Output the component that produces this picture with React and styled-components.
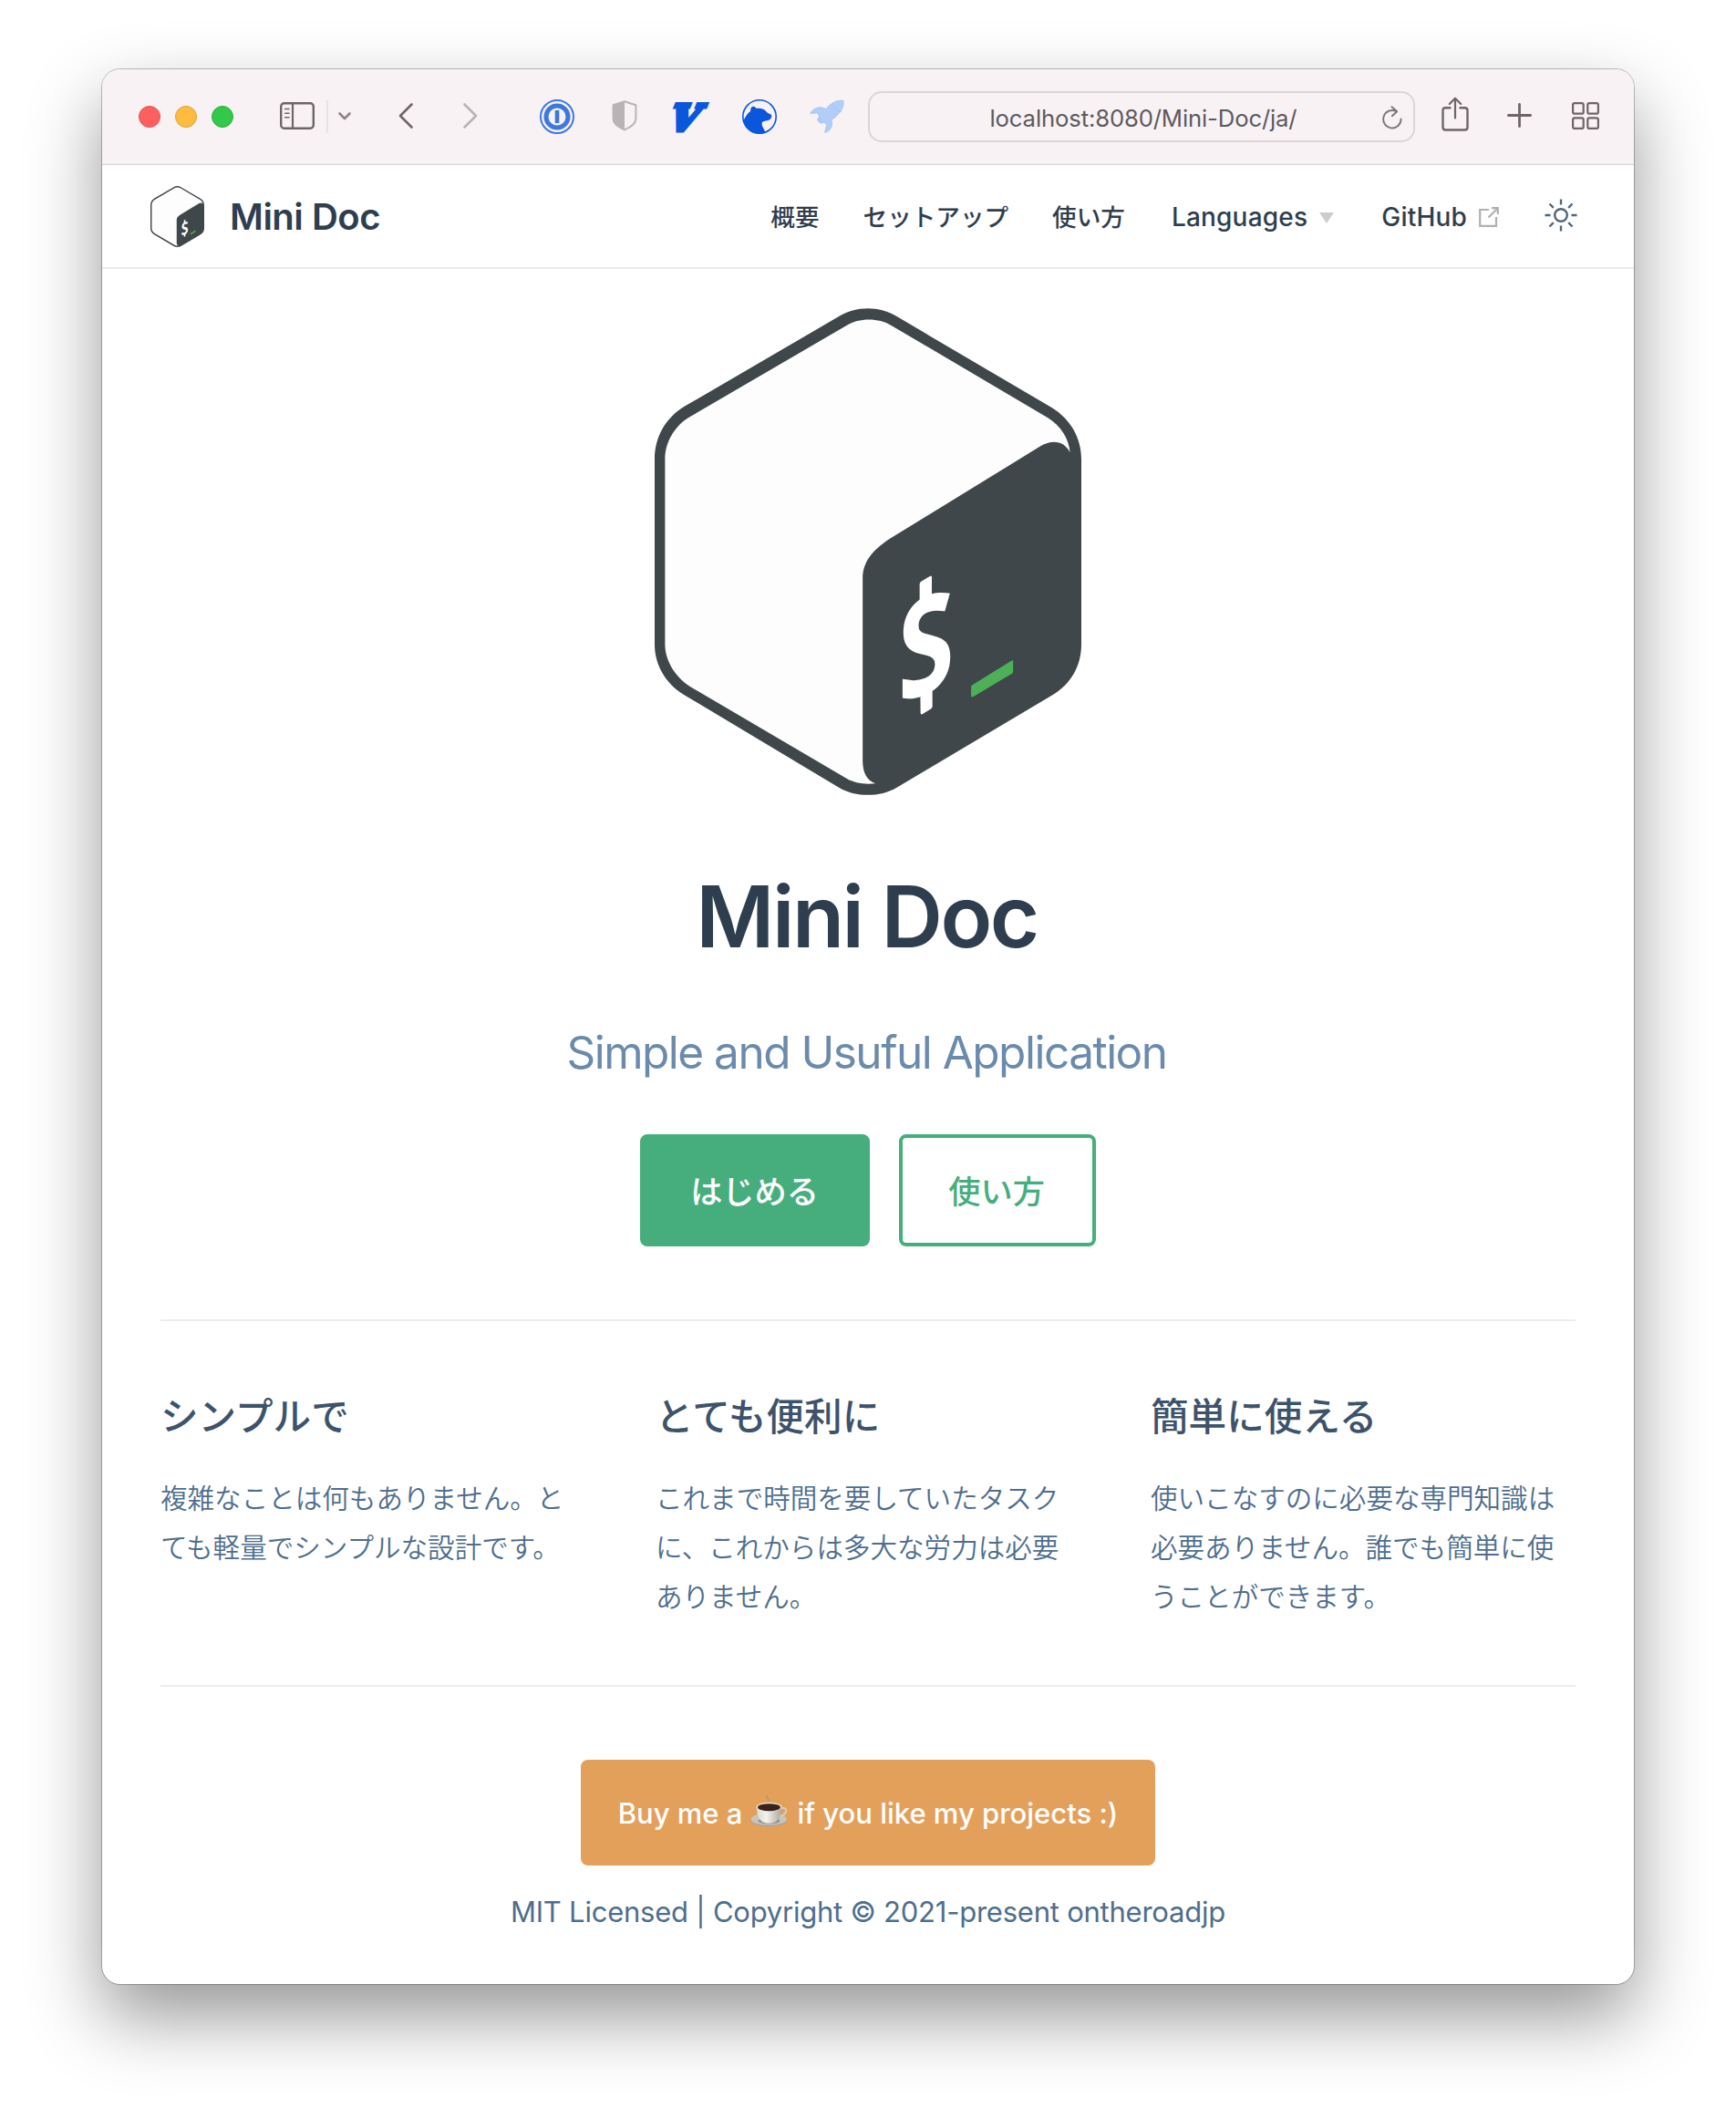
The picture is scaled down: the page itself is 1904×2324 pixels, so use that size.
import React from "react";
import styled, { createGlobalStyle } from "styled-components";

const sans = `Inter, "Noto Sans CJK JP", "Liberation Sans", sans-serif`;

const GlobalStyle = createGlobalStyle`
  * { box-sizing: border-box; }
  html, body { margin: 0; padding: 0; background: #fff; }
  body { font-family: ${sans}; color: #2f3e4e; -webkit-font-smoothing: antialiased; }
  h1, h2, p { margin: 0; }
  svg { display: block; flex: none; overflow: visible; }
  a { text-decoration: none; color: inherit; }
`;

const Desktop = styled.div`
  width: 1904px;
  height: 2324px;
  padding: 76px 112px 0;
  overflow: hidden;
`;

const Window = styled.div`
  height: 2100px;
  border-radius: 20px;
  background: #fff;
  overflow: hidden;
  display: flex;
  flex-direction: column;
  box-shadow: 0 0 0 1px rgba(0, 0, 0, 0.24), 0 36px 80px rgba(0, 0, 0, 0.41);
`;

const Toolbar = styled.div`
  height: 105px;
  flex: none;
  display: flex;
  align-items: center;
  padding: 0 38px 1px 40px;
  background: #f8f2f5;
  border-bottom: 1px solid #d5d2d4;
`;

const Lights = styled.div`
  display: flex;
  gap: 16px;
`;

const Light = styled.span`
  width: 24px;
  height: 24px;
  border-radius: 50%;
  background: ${(p) => p.$fill};
  border: 1px solid ${(p) => p.$edge};
`;

const Tool = styled.span`
  margin-left: ${(p) => p.$gap}px;
  padding-bottom: ${(p) => p.$lift || 0}px;
`;

const Divider = styled.span`
  width: 2px;
  height: 36px;
  margin-left: 13px;
  background: #e8e2e5;
`;

const AddressBar = styled.div`
  width: 600px;
  height: 56px;
  margin-left: 26px;
  padding: 2px 12px 0 0;
  display: flex;
  align-items: center;
  border: 2px solid #dbd5d8;
  border-radius: 15px;
`;

const Address = styled.span`
  flex: 1;
  text-align: center;
  padding: 2px 0 0 38px;
  font-size: 25.7px;
  letter-spacing: -0.15px;
  color: #5d5a5c;
`;

const Navbar = styled.header`
  height: 114px;
  flex: none;
  display: flex;
  align-items: center;
  padding: 0 62px 0 53px;
  border-bottom: 2px solid #eaeaef;
`;

const Brand = styled.a`
  display: flex;
  align-items: center;
  gap: 28px;
  font-size: 40px;
  font-weight: 600;
  letter-spacing: -0.5px;
`;

const Links = styled.nav`
  margin-left: auto;
  display: flex;
  align-items: center;
`;

const NavLink = styled.a`
  display: flex;
  align-items: center;
  gap: 13px;
  margin-left: ${(p) => p.$gap || 0}px;
  padding-top: ${(p) => (p.$latin ? 1 : 2)}px;
  font-size: ${(p) => (p.$latin ? 28 : 26.6)}px;
  font-weight: 500;
  line-height: 40px;
  letter-spacing: ${(p) => (p.$latin ? 0.2 : 0)}px;
`;

const Caret = styled.span`
  border: 8px solid transparent;
  border-top: 12px solid #ccc;
  border-bottom: 0;
  margin-top: 3px;
`;

const Home = styled.main`
  flex: 1;
  padding: 43px 64px 0;
`;

const Hero = styled.section`
  display: flex;
  flex-direction: column;
  align-items: center;
`;

const Title = styled.h1`
  margin-top: 77px;
  padding-right: 3px;
  font-size: 93.4px;
  line-height: 113px;
  font-weight: 600;
  letter-spacing: -2.5px;
`;

const Tagline = styled.p`
  margin-top: 60px;
  padding-right: 3px;
  font-size: 49.5px;
  line-height: 64px;
  letter-spacing: -1.5px;
  color: #6b8bad;
`;

const Actions = styled.div`
  display: flex;
  gap: 32px;
  margin-top: 58px;
`;

const ActionButton = styled.a`
  height: 123px;
  padding: 0 51.7px 2px 50.7px;
  display: flex;
  align-items: center;
  border: 4px solid #46ae7d;
  border-radius: 8px;
  font-size: 35.2px;
  font-weight: 500;
  background: ${(p) => (p.$primary ? "#46ae7d" : "#fff")};
  color: ${(p) => (p.$primary ? "#fff" : "#46ae7d")};
`;

const Features = styled.section`
  display: flex;
  justify-content: space-between;
  height: 403px;
  margin-top: 80px;
  padding-top: 75px;
  border-top: 2px solid #eaecef;
  border-bottom: 2px solid #eaecef;
`;

const Feature = styled.article`
  width: 466px;
`;

const FeatureTitle = styled.h2`
  font-size: 41.6px;
  line-height: 60px;
  font-weight: 500;
  color: #3d536b;
`;

const FeatureText = styled.p`
  margin-top: 32px;
  font-size: 29.56px;
  line-height: 54px;
  font-weight: 350;
  color: #4e6e8e;
`;

const Footer = styled.footer`
  display: flex;
  flex-direction: column;
  align-items: center;
  padding-top: 80px;
  gap: 30px;
  color: #4e6e8e;
  font-size: 31px;
`;

const Coffee = styled.a`
  width: 630px;
  height: 116px;
  display: flex;
  align-items: center;
  justify-content: center;
  gap: 9px;
  border-radius: 8px;
  background: #e3a05b;
  color: #fff;
  font-size: 31px;
  font-weight: 500;
`;

const CoffeeCup = styled.span`
  padding-bottom: 5px;
`;

const License = styled.p`
  line-height: 42px;
  letter-spacing: -0.23px;
`;

function Logo({ width, height }) {
  return (
    <svg width={width} height={height} viewBox="55 50 1401 1468" preserveAspectRatio="none">
      <path
        fill="#3f474a"
        d="M55 505C55 440 90 380 155 345L660 75C715 43 795 43 850 75L1360 350C1420 385 1456 440 1456 505V1063C1456 1130 1420 1185 1360 1217L850 1495C795 1525 715 1525 660 1495L150 1215C90 1180 55 1125 55 1063Z"
      />
      <path
        fill="#fdfdfd"
        d="M89 505C89 455 120 405 170 378L685 102C725 79 790 78 832 102L1345 380C1390 405 1415 445 1419 485C1400 450 1360 445 1322 466L825 746C770 780 738 815 738 865V1415C738 1450 752 1475 780 1483C745 1487 710 1482 685 1468L170 1190C120 1160 89 1110 89 1063Z"
      />
      <text
        transform="matrix(0.83 -0.3 0 1 946 1211)"
        textAnchor="middle"
        fontFamily="Open Sans, sans-serif"
        fontWeight="700"
        fontSize="405"
        fill="#fff"
      >
        S
      </text>
      <path
        fill="#fff"
        d="M925 882Q925 877 930 874L959 858Q965 855 965 862V940H925ZM927 1190H967V1250Q967 1255 962 1258L934 1274Q928 1277 928 1270Z"
      />
      <path
        fill="#4db058"
        d="M1098 1186L1226 1113Q1232 1110 1232 1116V1146Q1232 1150 1228 1152L1100 1222Q1094 1224 1094 1218V1192Q1094 1188 1098 1186Z"
      />
    </svg>
  );
}

const ink = "#6d6569";

function SidebarIcon() {
  return (
    <svg width="38" height="30" viewBox="0 0 38 30" fill="none" stroke={ink} strokeLinecap="round">
      <rect x="1.2" y="1.2" width="35.6" height="27.6" rx="3.5" strokeWidth="2.4" />
      <path d="M14 1.5V28.5" strokeWidth="2.2" />
      <path d="M5.7 7.5H10M5.7 12.2H10M5.7 16.8H10" strokeWidth="1.6" />
    </svg>
  );
}

function Chevron({ width, height, d, color, weight }) {
  return (
    <svg width={width} height={height} viewBox={`0 0 ${width} ${height}`} fill="none">
      <path d={d} stroke={color} strokeWidth={weight} strokeLinecap="round" strokeLinejoin="round" />
    </svg>
  );
}

function PasswordIcon() {
  return (
    <svg width="38" height="38" viewBox="0 0 38 38" fill="none" stroke="#3d78de">
      <circle cx="19" cy="19" r="18" strokeWidth="2" />
      <circle cx="19" cy="19" r="12" strokeWidth="5" />
      <path d="M19 12V26" strokeWidth="4.6" />
    </svg>
  );
}

function ShieldIcon() {
  return (
    <svg width="28" height="34" viewBox="0 0 28 34">
      <path d="M14 1.3L26.4 5.3V20C26.4 25.5 21 29.5 14 32.4C7 29.5 1.6 25.5 1.6 20V5.3Z" fill="none" stroke="#b9b3b6" strokeWidth="2" strokeLinejoin="round" />
      <path d="M14 1L1 5V20C1 26 7 30 14 33Z" fill="#b9b3b6" />
    </svg>
  );
}

function VimIcon() {
  return (
    <svg width="38" height="36" viewBox="0 0 38 36">
      <text
        transform="matrix(1.04 0 -0.42 1 -9.5 33)"
        fontFamily="DejaVu Serif, serif"
        fontWeight="700"
        fontSize="39"
        fill="#0b57dc"
        stroke="#0b57dc"
        strokeWidth="5"
      >
        V
      </text>
    </svg>
  );
}

function BearIcon() {
  return (
    <svg width="38" height="38" viewBox="0 0 38 38">
      <clipPath id="badge"><circle cx="19" cy="19" r="18.5" /></clipPath>
      <path
        clipPath="url(#badge)"
        fill="#0b57dc"
        d="M0 27C2.500 21 4.500 16.500 9 13C9.300 10.500 9.500 8.200 11.500 7.800C13.500 7.500 14.800 8.600 15.600 10C20 9.400 24.500 10.200 27 14C28.500 15.500 31 15.800 32.200 17.200C32.600 19.500 31.500 21.500 29.500 22.600C26.500 24 22.500 23.200 21.700 26C21.200 30 24.500 32 26 38H0Z"
      />
      <circle cx="19" cy="19" r="18.2" fill="none" stroke="#0b57dc" strokeWidth="1.6" />
    </svg>
  );
}

function RocketIcon() {
  return (
    <svg width="38" height="37" viewBox="0 0 38 37" fill="#b1cdf8" stroke="#9fbdf0" strokeWidth="0.8" strokeLinejoin="round">
      <path d="M0.6 15.5C3 11 7.5 8.5 12.5 8.7L18 10.5C23 4 29.5 0.6 36.8 1.2C38.4 7.5 34 16 24 22.4L24.5 27C24.5 31 21.5 35.5 16.6 36.2L18.8 28L16 25L12.3 26.4L8.4 22.6L10.6 18.8L8.5 14.8Z" />
      <path d="M25.6 4.4C26 9.5 29.5 12.6 34.5 13.4M8.4 22.6L12.3 26.4M10.8 20L15 24.6" fill="none" />
    </svg>
  );
}

function ReloadIcon() {
  return (
    <svg width="22" height="26" viewBox="0 0 22 26" fill="none" stroke="#7b7679" strokeWidth="1.9" strokeLinecap="round" strokeLinejoin="round">
      <path d="M20.6 14.5A9.7 9.7 0 1 1 15.5 6.2" />
      <path d="M10.5 1.2L16.2 6.2L10.8 11.2" />
    </svg>
  );
}

function ShareIcon() {
  return (
    <svg width="30" height="38" viewBox="0 0 30 38" fill="none" stroke={ink} strokeWidth="2.4" strokeLinecap="round" strokeLinejoin="round">
      <path d="M9.5 12.2H4.5Q1.5 12.2 1.5 15.2V33.5Q1.5 36.5 4.5 36.5H25.5Q28.5 36.5 28.5 33.5V15.2Q28.5 12.2 25.5 12.2H20.5" />
      <path d="M15 23.5V2M8.8 8L15 1.8L21.2 8" strokeWidth="2.2" />
    </svg>
  );
}

function PlusIcon() {
  return (
    <svg width="27" height="27" viewBox="0 0 27 27" stroke={ink} strokeWidth="2.8" strokeLinecap="round">
      <path d="M13.5 1.4V25.6M1.4 13.5H25.6" />
    </svg>
  );
}

function GridIcon() {
  return (
    <svg width="30" height="30" viewBox="0 0 30 30" fill="none" stroke={ink} strokeWidth="2.2">
      <rect x="1.1" y="1.1" width="11.6" height="11.6" rx="2" />
      <rect x="17.3" y="1.1" width="11.6" height="11.6" rx="2" />
      <rect x="1.1" y="17.3" width="11.6" height="11.6" rx="2" />
      <rect x="17.3" y="17.3" width="11.6" height="11.6" rx="2" />
    </svg>
  );
}

function ExternalIcon() {
  return (
    <svg width="22" height="22" viewBox="0 0 22 22" fill="none" stroke="#b0b0b0" strokeWidth="2.2">
      <path d="M11 3H1.2V20.8H19V11" />
      <path d="M10.5 11.5L20 2M14 1.2H20.8V8" />
    </svg>
  );
}

function SunIcon() {
  return (
    <svg width="36" height="36" viewBox="0 0 36 36" fill="none" stroke="#52667a" strokeWidth="2.4">
      <circle cx="18" cy="18" r="6.8" />
      <path d="M18 0.5V6.5M18 29.5V35.5M0.5 18H6.5M29.5 18H35.5M5.5 5.5L9.8 9.8M26.2 26.2L30.5 30.5M5.5 30.5L9.8 26.2M26.2 9.8L30.5 5.5" />
    </svg>
  );
}

function CupIcon() {
  return (
    <svg width="42" height="36" viewBox="0 0 42 36">
      <defs>
        <linearGradient id="china" x1="0" x2="1">
          <stop offset="0" stopColor="#dedad2" />
          <stop offset="0.4" stopColor="#f4f2ee" />
          <stop offset="1" stopColor="#aaa69e" />
        </linearGradient>
      </defs>
      <path d="M19 8C23 5 15 4 19 0.8" fill="none" stroke="#c08f66" strokeWidth="1.8" opacity="0.7" />
      <ellipse cx="20.2" cy="28.4" rx="19.8" ry="6.8" fill="#a9a59b" />
      <ellipse cx="20.2" cy="27.2" rx="19.6" ry="6.6" fill="#c9c5bc" />
      <ellipse cx="20.5" cy="29" rx="12" ry="3.6" fill="#98948a" />
      <path d="M34 15.600C38 14 40.500 16.500 38.500 20C37 22.600 34.500 23.600 32 23.400" fill="none" stroke="#d2cec6" strokeWidth="2" />
      <path d="M6.800 14C7 21 9 28 14 30.500Q20.500 33 27 30.500C32 28 34 21 34.300 14Z" fill="url(#china)" />
      <ellipse cx="20.5" cy="13.8" rx="14" ry="5" fill="#e6e1d8" />
      <ellipse cx="20.5" cy="14.2" rx="12.4" ry="4" fill="#3a231a" />
    </svg>
  );
}

const features = [
  ["シンプルで", "複雑なことは何もありません。とても軽量でシンプルな設計です。"],
  ["とても便利に", "これまで時間を要していたタスクに、これからは多大な労力は必要ありません。"],
  ["簡単に使える", "使いこなすのに必要な専門知識は必要ありません。誰でも簡単に使うことができます。"],
];

export default function App() {
  return (
    <>
      <GlobalStyle />
      <Desktop>
        <Window>
          <Toolbar>
            <Lights>
              <Light $fill="#fd605e" $edge="#e5504f" />
              <Light $fill="#fdbc40" $edge="#e0a133" />
              <Light $fill="#34c84a" $edge="#2aae3c" />
            </Lights>
            <Tool $gap={51} $lift={2}><SidebarIcon /></Tool>
            <Divider />
            <Tool $gap={11}>
              <Chevron width={14} height={9} d="M1.5 1.5L7 7L12.5 1.5" color="#8d858a" weight={2.6} />
            </Tool>
            <Tool $gap={52} $lift={2}>
              <Chevron width={16} height={28} d="M14.5 1.5L2 14L14.5 26.5" color={ink} weight={2.6} />
            </Tool>
            <Tool $gap={55} $lift={2}>
              <Chevron width={16} height={28} d="M1.5 1.5L14 14L1.5 26.5" color="#b9b2b6" weight={2.6} />
            </Tool>
            <Tool $gap={68}><PasswordIcon /></Tool>
            <Tool $gap={41} $lift={1}><ShieldIcon /></Tool>
            <Tool $gap={41}><VimIcon /></Tool>
            <Tool $gap={36}><BearIcon /></Tool>
            <Tool $gap={36}><RocketIcon /></Tool>
            <AddressBar>
              <Address>localhost:8080/Mini-Doc/ja/</Address>
              <ReloadIcon />
            </AddressBar>
            <Tool $gap={29} $lift={5}><ShareIcon /></Tool>
            <Tool $gap={42} $lift={3}><PlusIcon /></Tool>
            <Tool $gap={44} $lift={2}><GridIcon /></Tool>
          </Toolbar>
          <Navbar>
            <Brand><Logo width={59} height={67} />Mini Doc</Brand>
            <Links>
              <NavLink>概要</NavLink>
              <NavLink $gap={48}>セットアップ</NavLink>
              <NavLink $gap={48}>使い方</NavLink>
              <NavLink $latin $gap={51}>Languages<Caret /></NavLink>
              <NavLink $latin $gap={52}>GitHub<ExternalIcon /></NavLink>
              <Tool $gap={50} $lift={3}><SunIcon /></Tool>
            </Links>
          </Navbar>
          <Home>
            <Hero>
              <Logo width={468} height={534} />
              <Title>Mini Doc</Title>
              <Tagline>Simple and Usuful Application</Tagline>
              <Actions>
                <ActionButton $primary>はじめる</ActionButton>
                <ActionButton>使い方</ActionButton>
              </Actions>
            </Hero>
            <Features>
              {features.map(([title, text]) => (
                <Feature key={title}>
                  <FeatureTitle>{title}</FeatureTitle>
                  <FeatureText>{text}</FeatureText>
                </Feature>
              ))}
            </Features>
            <Footer>
              <Coffee>
                <span>Buy me a</span>
                <CoffeeCup><CupIcon /></CoffeeCup>
                <span>if you like my projects :)</span>
              </Coffee>
              <License>MIT Licensed | Copyright © 2021-present ontheroadjp</License>
            </Footer>
          </Home>
        </Window>
      </Desktop>
    </>
  );
}
